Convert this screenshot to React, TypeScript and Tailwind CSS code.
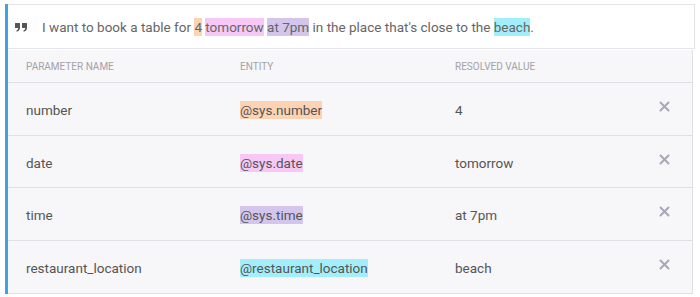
import React from "react";

const rows = [
  { name: "number", entity: "@sys.number", color: "bg-[#fdd3b3]", value: "4" },
  { name: "date", entity: "@sys.date", color: "bg-[#f7c8f6]", value: "tomorrow" },
  { name: "time", entity: "@sys.time", color: "bg-[#d3c5ec]", value: "at 7pm" },
  { name: "restaurant_location", entity: "@restaurant_location", color: "bg-[#a3eefb]", value: "beach" },
];

function X() {
  return (
    <svg width="11" height="11" viewBox="0 0 11 11">
      <path d="M1.5 1.5 L9.5 9.5 M9.5 1.5 L1.5 9.5" stroke="#aaa7b5" strokeWidth="2" strokeLinecap="round" />
    </svg>
  );
}

function Quote() {
  return (
    <svg width="12" height="9" viewBox="0 0 12 9">
      <path d="M0 0.5 Q0 0 0.5 0 H4.5 Q5 0 5 0.5 V4.8 C5 7 3.6 8.4 1.6 8.8 V7.2 C2.7 6.9 3.2 6.1 3.2 5 H0.5 Q0 5 0 4.5 Z" fill="#555" />
      <path d="M7 0.5 Q7 0 7.5 0 H11.5 Q12 0 12 0.5 V4.8 C12 7 10.6 8.4 8.6 8.8 V7.2 C9.7 6.9 10.2 6.1 10.2 5 H7.5 Q7 5 7 4.5 Z" fill="#555" />
    </svg>
  );
}

export default function App() {
  return (
    <div className="w-[700px] h-[297px] bg-white pt-[4px] pl-[5px]" style={{ fontFamily: "Roboto, sans-serif" }}>
      <div className="flex h-[290px] w-[690px]">
        <div className="w-[3px] bg-[#3da3e3] shrink-0" />
        <div className="flex flex-col flex-1">
          <div className="h-[45px] shrink-0 border border-l-0 border-[#e4e3e8] bg-white flex items-center pl-[7px] text-[13.5px] text-[#666]">
            <div className="mr-[15px] mt-[1px] flex"><Quote /></div>
            <span className="mt-[2px]">
              I want to book a table for <span className="bg-[#fdd3b3] py-[1px]">4</span>{" "}
              <span className="bg-[#f7c8f6] py-[1px]">tomorrow</span>{" "}
              <span className="bg-[#d3c5ec] py-[1px]">at 7pm</span> in the place that's close to the{" "}
              <span className="bg-[#a3eefb] py-[1px]">beach</span>.
            </span>
          </div>
          <div className="mt-[1px] mr-[2px] bg-[#f7f6f9] border-r border-b border-[#e0dfe4] flex-1 flex flex-col">
            <div className="h-[33px] shrink-0 grid grid-cols-[214px_215px_1fr_33px] items-center pl-[18px] text-[10px] uppercase text-[#a3a2a8] border-b border-[#e0dfe4]">
              <div className="mt-[1px]">Parameter name</div>
              <div className="mt-[1px]">Entity</div>
              <div className="mt-[1px]">Resolved value</div>
              <div />
            </div>
            {rows.map((r, i) => (
              <div
                key={r.name}
                className={`h-[52.5px] shrink-0 grid grid-cols-[214px_215px_1fr_33px] items-center pl-[18px] text-[13.5px] text-[#555] ${i < rows.length - 1 ? "border-b border-[#e0dfe4]" : ""}`}
              >
                <div className="mt-[3px]">{r.name}</div>
                <div className="mt-[3px]">
                  <span className={`${r.color} py-[1px]`}>{r.entity}</span>
                </div>
                <div className="mt-[3px]">{r.value}</div>
                <div className="flex items-center -mt-[4px]">
                  <X />
                </div>
              </div>
            ))}
          </div>
        </div>
      </div>
    </div>
  );
}
